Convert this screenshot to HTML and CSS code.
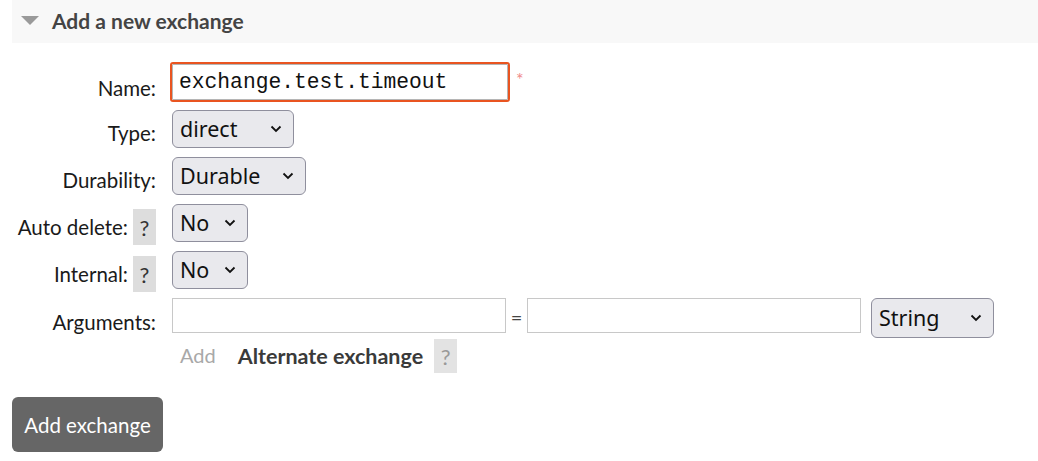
FILE: index.html
```html
<!DOCTYPE html>
<html>
<head>
<meta charset="utf-8">
<link rel="stylesheet" href="styles.css">
</head>
<body>
<div class="section-head">
  <span class="tri"></span>
  <h2 class="title">Add a new exchange</h2>
</div>
<div class="form">
  <label class="lbl lbl-name">Name:</label>
  <div class="ctl ctl-name">
    <input class="name-input" type="text" value="exchange.test.timeout">
    <span class="req">*</span>
  </div>

  <label class="lbl">Type:</label>
  <div class="ctl">
    <span class="sel sel-type"><select><option>direct</option></select><svg class="chev" viewBox="0 0 12 8"><path d="M1.5 1.5 L6 6 L10.5 1.5"/></svg></span>
  </div>

  <label class="lbl">Durability:</label>
  <div class="ctl">
    <span class="sel sel-dur"><select><option>Durable</option></select><svg class="chev" viewBox="0 0 12 8"><path d="M1.5 1.5 L6 6 L10.5 1.5"/></svg></span>
  </div>

  <label class="lbl lbl-help">Auto delete: <span class="help">?</span></label>
  <div class="ctl">
    <span class="sel sel-no"><select><option>No</option></select><svg class="chev" viewBox="0 0 12 8"><path d="M1.5 1.5 L6 6 L10.5 1.5"/></svg></span>
  </div>

  <label class="lbl lbl-help">Internal: <span class="help">?</span></label>
  <div class="ctl">
    <span class="sel sel-no"><select><option>No</option></select><svg class="chev" viewBox="0 0 12 8"><path d="M1.5 1.5 L6 6 L10.5 1.5"/></svg></span>
  </div>

  <label class="lbl lbl-args">Arguments:</label>
  <div class="ctl ctl-args">
    <input class="arg-input" type="text">
    <span class="eq">=</span>
    <input class="arg-input" type="text">
    <span class="sel sel-str"><select><option>String</option></select><svg class="chev" viewBox="0 0 12 8"><path d="M1.5 1.5 L6 6 L10.5 1.5"/></svg></span>
  </div>

  <span class="spacer"></span>
  <div class="ctl ctl-add">
    <span class="add-link">Add</span>
    <span class="alt">Alternate exchange</span>
    <span class="help help-light">?</span>
  </div>
</div>
<button class="submit" type="button">Add exchange</button>
</body>
</html>
```

FILE: styles.css
```css
html, body {
  margin: 0;
  padding: 0;
  background: #ffffff;
}
body {
  padding-left: 12px;
  font-family: Lato, "Noto Sans", sans-serif;
  color: #222;
}
.section-head {
  display: flex;
  align-items: center;
  height: 43px;
  background: #f8f8f8;
  padding-left: 9px;
}
.tri {
  width: 0;
  height: 0;
  border-left: 9px solid transparent;
  border-right: 9px solid transparent;
  border-top: 9px solid #9a9a9a;
  margin-top: -2px;
}
.title {
  margin: -2px 0 0 13px;
  font-size: 21px;
  font-weight: 700;
  color: #444;
  line-height: 24px;
}
.form {
  display: grid;
  grid-template-columns: 144px max-content;
  column-gap: 16px;
  row-gap: 9px;
  margin-top: 19px;
}
.lbl {
  justify-self: end;
  font-size: 20.5px;
  line-height: 24px;
  color: #1a1a1a;
  padding-top: 11px;
  white-space: nowrap;
}
.lbl-name { padding-top: 14px; }
.lbl-args { padding-top: 12px; }
.lbl-help {
  display: flex;
  align-items: flex-start;
  box-sizing: border-box;
  height: 38px;
  padding-top: 5px;
  line-height: 36px;
}
.lbl-help .help { margin-left: 5px; }
.help {
  display: inline-block;
  width: 23px;
  height: 36px;
  line-height: 38px;
  text-align: center;
  background: #dddddd;
  color: #333;
  font-size: 22px;
}
.help-light {
  background: #e3e3e3;
  color: #999;
  height: 34px;
  line-height: 36px;
}
.ctl {
  display: flex;
  align-items: flex-start;
}
.ctl-name {
  padding-top: 2px;
  padding-bottom: 1px;
}
.name-input {
  box-sizing: border-box;
  width: 336px;
  height: 36px;
  margin: 0;
  border: 1px solid #b5b5b5;
  outline: 2px solid #e95420;
  border-radius: 1px;
  padding: 0 6px;
  font-family: "Liberation Mono", monospace;
  font-size: 21.3px;
  color: #111;
  background: #fff;
}
.req {
  color: #f08a8a;
  font-size: 18px;
  margin-left: 8px;
  margin-top: 4px;
}
.sel {
  position: relative;
  display: inline-block;
}
.sel select {
  appearance: none;
  -webkit-appearance: none;
  box-sizing: border-box;
  height: 38px;
  margin: 0;
  padding: 0 0 0 7px;
  border: 1px solid #8f8f9d;
  border-radius: 6px;
  background: #e9e9ed;
  font-family: "Noto Sans", sans-serif;
  font-size: 21.5px;
  color: #111;
  line-height: 36px;
}
.chev {
  position: absolute;
  top: 50%;
  right: 12px;
  width: 12px;
  height: 8px;
  margin-top: -4px;
  fill: none;
  stroke: #111;
  stroke-width: 1.8;
  pointer-events: none;
}
.sel-type select { width: 122px; }
.sel-dur select { width: 134px; }
.sel-no select { width: 76px; }
.sel-str select { width: 123px; height: 40px; }
.arg-input {
  box-sizing: border-box;
  width: 334px;
  height: 35px;
  margin: 0;
  border: 1px solid #c8c8c8;
  background: #fff;
  padding: 0 6px;
}
.eq {
  width: 21px;
  text-align: center;
  font-size: 20px;
  color: #444;
  line-height: 38px;
}
.sel-str { margin-left: 10px; }
.ctl-add {
  align-items: center;
  margin-top: -8px;
}
.add-link {
  color: #a8a8a8;
  font-size: 20px;
  margin-left: 8px;
  margin-top: -3px;
}
.alt {
  font-weight: 700;
  font-size: 21.5px;
  color: #3a3a3a;
  margin-left: 22px;
}
.alt + .help { margin-left: 11px; }
.spacer { display: block; }
.submit {
  display: block;
  margin: 24px 0 0 0;
  width: 151px;
  height: 55px;
  border: none;
  border-radius: 6px;
  background: #666666;
  color: #ffffff;
  font-family: Lato, "Noto Sans", sans-serif;
  font-size: 20.5px;
  padding: 0;
}
```
